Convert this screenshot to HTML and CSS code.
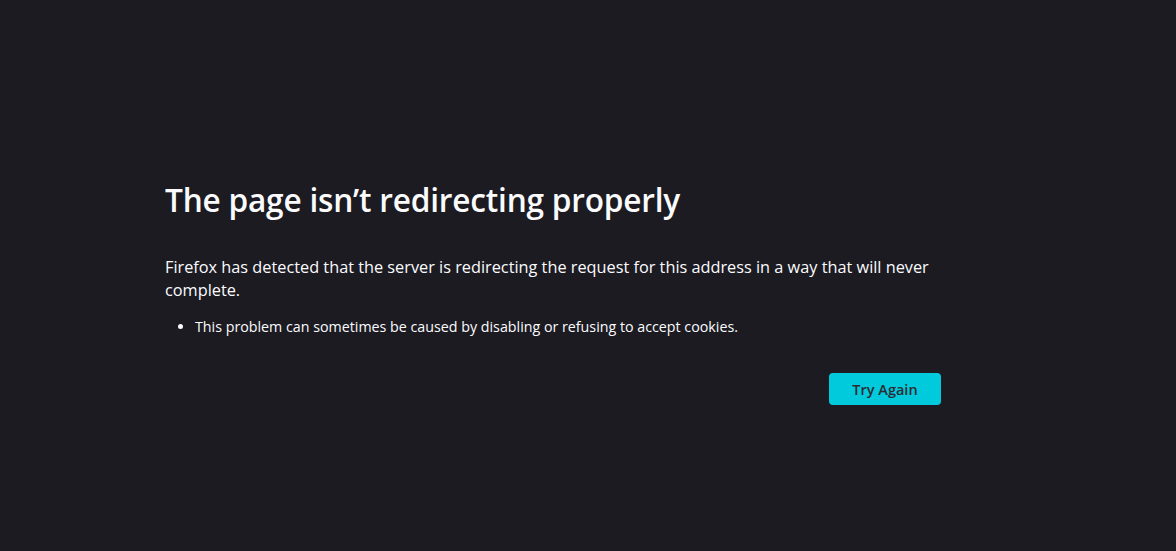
FILE: index.html
```html
<!DOCTYPE html>
<html lang="en">
<head>
<meta charset="utf-8">
<title>Problem loading page</title>
<link rel="stylesheet" href="styles.css">
</head>
<body>
<main class="container">
  <h1 class="title">The page isn’t redirecting properly</h1>
  <p class="desc">Firefox has detected that the server is redirecting the request for this address in a way that will never complete.</p>
  <ul class="list">
    <li>This problem can sometimes be caused by disabling or refusing to accept cookies.</li>
  </ul>
  <div class="actions">
    <button class="btn">Try Again</button>
  </div>
</main>
</body>
</html>
```
FILE: styles.css
```css
html, body {
  margin: 0;
  padding: 0;
  height: 100%;
}
body {
  background: #1c1b22;
  color: #fbfbfe;
  font-family: "Open Sans", "Noto Sans", sans-serif;
}
.container {
  width: 776px;
  margin-left: 165px;
  padding-top: 178px;
}
.title {
  margin: 0;
  font-size: 31.6px;
  font-weight: 600;
  line-height: 44px;
  letter-spacing: -0.2px;
}
.desc {
  margin: 34px 0 0;
  font-size: 16.3px;
  line-height: 23px;
}
.list {
  margin: 15px 0 0;
  padding-left: 30px;
  font-size: 14.25px;
  line-height: 20px;
}
.actions {
  display: flex;
  justify-content: flex-end;
  margin-top: 36px;
}
.btn {
  width: 112px;
  height: 32px;
  border: none;
  border-radius: 4px;
  background: #00cadb;
  color: #2b2a33;
  font-family: inherit;
  font-size: 14.5px;
  font-weight: 600;
}
```
